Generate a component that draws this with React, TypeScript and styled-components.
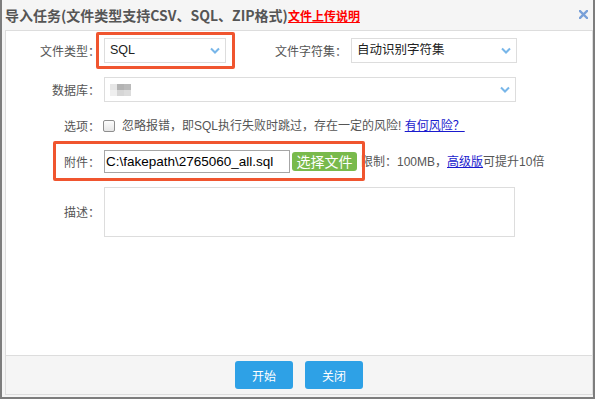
import * as React from 'react';
import styled, { createGlobalStyle } from 'styled-components';

const GlobalStyle = createGlobalStyle`
  html, body {
    margin: 0;
    padding: 0;
    background: #fff;
  }
  body {
    font-family: "Liberation Sans", "Noto Sans CJK SC", sans-serif;
    font-size: 12px;
    color: #555;
  }
  * {
    box-sizing: border-box;
  }
`;

const Window = styled.div`
  background: #f5f5f5;
  border: 2px solid #7d7d7d;
  border-top: 0;
  display: flex;
  flex-direction: column;
  height: 399px;
  padding: 0 0 2px 3px;
  width: 595px;
`;

const Header = styled.div`
  align-items: center;
  display: flex;
  flex: none;
  height: 30px;
  justify-content: space-between;
  padding: 0 5px 1px 0;
`;

const Title = styled.div`
  color: #555;
  font-family: "Noto Sans CJK SC", sans-serif;
  font-size: 14px;
  font-weight: bold;
  line-height: 1;
  white-space: nowrap;
`;

const HelpLink = styled.a`
  color: #f00;
  font-size: 12px;
  text-decoration: underline;
`;

const Body = styled.div`
  background: #fff;
  border: 1px solid #ddd;
  display: flex;
  flex: 1;
  flex-direction: column;
`;

const Form = styled.div`
  display: flex;
  flex: 1;
  flex-direction: column;
  gap: 14px;
  padding-top: 7px;
`;

const Row = styled.div<{ $h: number }>`
  align-items: center;
  display: flex;
  height: ${({ $h }) => $h}px;
  position: relative;
`;

const Label = styled.div<{ $w?: number }>`
  color: #555;
  flex: none;
  font-family: "Noto Sans CJK SC", sans-serif;
  line-height: 1;
  padding-right: 4px;
  text-align: right;
  width: ${({ $w }) => $w ?? 98}px;
`;

const Select = styled.div<{ $w: number }>`
  align-items: center;
  background: #fff;
  border: 1px solid #ddd;
  color: #222;
  display: flex;
  flex: none;
  font-size: 12.5px;
  height: 25px;
  justify-content: space-between;
  line-height: 1;
  padding: 0 5px 0 5px;
  width: ${({ $w }) => $w}px;
`;

const Chevron = () => (
  <svg width="10" height="7" viewBox="0 0 10 7">
    <polyline points="1,1.5 5,5.5 9,1.5" fill="none" stroke="#78b6e9" strokeWidth="2" />
  </svg>
);

const Blur = styled.span`
  display: grid;
  grid-template-columns: repeat(3, 7px);
  grid-template-rows: repeat(2, 6px);
  filter: blur(0.4px);
`;

const Pix = styled.span<{ $c: string }>`
  background: ${({ $c }) => $c};
`;

const Checkbox = styled.span`
  background: linear-gradient(#fdfdfd, #e6e6e6);
  border: 1px solid #8e8e8e;
  border-radius: 2px;
  flex: none;
  height: 12px;
  margin-left: -1px;
  width: 12px;
`;

const Text = styled.span<{ $ml?: number }>`
  color: #555;
  line-height: 1;
  margin-left: ${({ $ml }) => $ml ?? 0}px;
  white-space: nowrap;
`;

const Link = styled.a`
  color: #1a1acd;
  text-decoration: underline;
`;

const FileInput = styled.input`
  border: 1px solid #a6a6a6;
  color: #000;
  flex: none;
  font-family: "Liberation Sans", sans-serif;
  font-size: 13.5px;
  height: 23px;
  outline: none;
  padding: 0 1px;
  width: 186px;
`;

const PickButton = styled.button`
  background: #79ba4c;
  border: 0;
  border-radius: 3px;
  color: #fff;
  flex: none;
  font-family: "Noto Sans CJK SC", sans-serif;
  font-size: 14px;
  height: 19px;
  line-height: 19px;
  margin-left: 2px;
  padding: 0 4px;
  width: 65px;
`;

const TextArea = styled.textarea`
  border: 1px solid #ddd;
  height: 50px;
  outline: none;
  resize: none;
  width: 411px;
`;

const Mark = styled.span<{ $l: number; $t: number; $w: number; $h: number }>`
  border: 3px solid #f0552f;
  border-radius: 2px;
  height: ${({ $h }) => $h}px;
  left: ${({ $l }) => $l}px;
  pointer-events: none;
  position: absolute;
  top: ${({ $t }) => $t}px;
  width: ${({ $w }) => $w}px;
`;

const Footer = styled.div`
  align-items: center;
  background: #f5f5f5;
  border-top: 1px solid #ddd;
  display: flex;
  flex: none;
  gap: 12px;
  height: 39px;
  justify-content: center;
`;

const FooterButton = styled.button`
  background: #2ea1e6;
  border: 0;
  border-radius: 3px;
  color: #fff;
  font-family: "Noto Sans CJK SC", sans-serif;
  font-size: 12px;
  height: 28px;
  width: 58px;
`;

const CloseIcon = () => (
  <svg width="9" height="9" viewBox="0 0 9 9">
    <path d="M1 1L8 8M8 1L1 8" stroke="#79a0d8" strokeWidth="2.4" strokeLinecap="square" />
  </svg>
);

const blurColors = ['#e6e6e6', '#b3b3b3', '#bababa', '#efefef', '#d6d6d6', '#dcdcdc'];

export default function App() {
  return (
    <>
      <GlobalStyle />
      <Window>
        <Header>
          <Title>
            导入任务(文件类型支持CSV、SQL、ZIP格式)<HelpLink>文件上传说明</HelpLink>
          </Title>
          <CloseIcon />
        </Header>
        <Body>
          <Form>
            <Row $h={25}>
              <Label>文件类型：</Label>
              <Select $w={122}>
                <span>SQL</span>
                <Chevron />
              </Select>
              <Label $w={125}>文件字符集：</Label>
              <Select $w={166}>
                <span>自动识别字符集</span>
                <Chevron />
              </Select>
              <Mark $l={90} $t={-6} $w={139} $h={37} />
            </Row>
            <Row $h={25}>
              <Label>数据库：</Label>
              <Select $w={412}>
                <Blur>
                  {blurColors.map((c, i) => (
                    <Pix key={i} $c={c} />
                  ))}
                </Blur>
                <Chevron />
              </Select>
            </Row>
            <Row $h={20}>
              <Label>选项：</Label>
              <Checkbox />
              <Text $ml={7}>
                忽略报错，即SQL执行失败时跳过，存在一定的风险! <Link>有何风险？</Link>
              </Text>
            </Row>
            <Row $h={23}>
              <Label>附件：</Label>
              <FileInput readOnly value="C:\fakepath\2765060_all.sql" />
              <PickButton>选择文件</PickButton>
              <Text $ml={4}>
                限制：100MB，<Link>高级版</Link>可提升10倍
              </Text>
              <Mark $l={47} $t={-9} $w={312} $h={40} />
            </Row>
            <Row $h={50}>
              <Label>描述：</Label>
              <TextArea />
            </Row>
          </Form>
          <Footer>
            <FooterButton>开始</FooterButton>
            <FooterButton>关闭</FooterButton>
          </Footer>
        </Body>
      </Window>
    </>
  );
}
